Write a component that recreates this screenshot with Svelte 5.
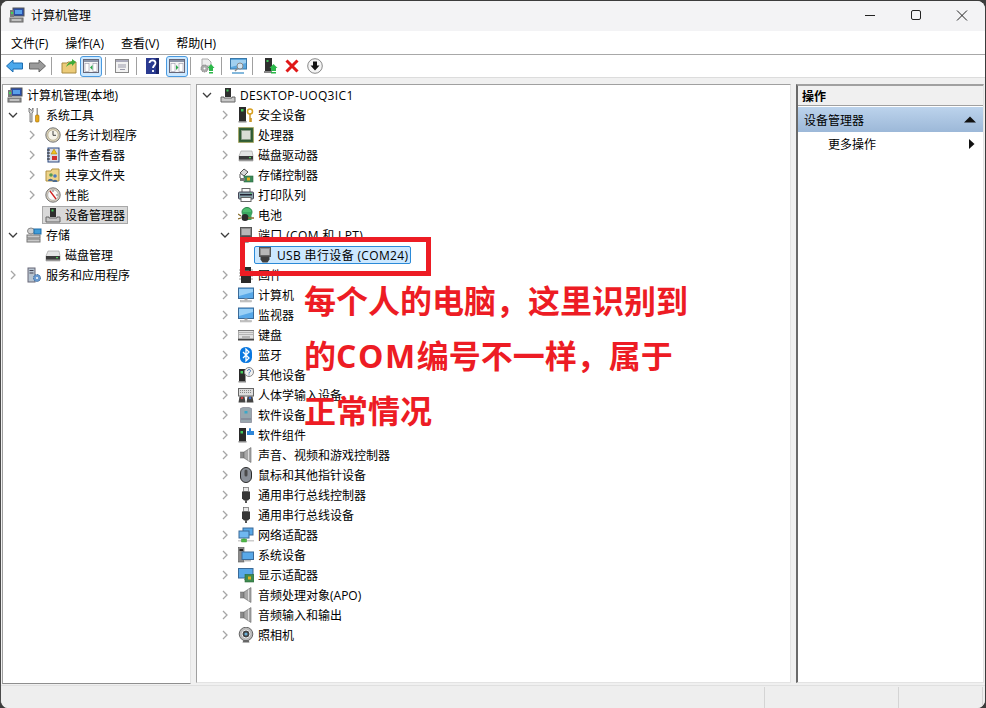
<script>
  const leftTree = [
    { label: '计算机管理(本地)', icon: 'mgmt', lv: 0 },
    { label: '系统工具', icon: 'tools', lv: 1, twist: 'open' },
    { label: '任务计划程序', icon: 'clock', lv: 2, twist: 'closed' },
    { label: '事件查看器', icon: 'log', lv: 2, twist: 'closed' },
    { label: '共享文件夹', icon: 'shared', lv: 2, twist: 'closed' },
    { label: '性能', icon: 'perf', lv: 2, twist: 'closed' },
    { label: '设备管理器', icon: 'desktop', lv: 2, twist: 'none', selected: true },
    { label: '存储', icon: 'storage', lv: 1, twist: 'open' },
    { label: '磁盘管理', icon: 'disk', lv: 2, twist: 'none' },
    { label: '服务和应用程序', icon: 'services', lv: 1, twist: 'closed' }
  ];

  const devices = [
    { label: 'DESKTOP-UOQ3IC1', icon: 'desktop', lv: 0, twist: 'open', wide: true },
    { label: '安全设备', icon: 'security', lv: 1, twist: 'closed' },
    { label: '处理器', icon: 'cpu', lv: 1, twist: 'closed' },
    { label: '磁盘驱动器', icon: 'disk', lv: 1, twist: 'closed' },
    { label: '存储控制器', icon: 'storagectl', lv: 1, twist: 'closed' },
    { label: '打印队列', icon: 'printer', lv: 1, twist: 'closed' },
    { label: '电池', icon: 'battery', lv: 1, twist: 'closed' },
    { label: '端口 (COM 和 LPT)', icon: 'port', lv: 1, twist: 'open', wide: true },
    { label: 'USB 串行设备 (COM24)', icon: 'port', lv: 2, focus: true, wide: true },
    { label: '固件', icon: 'firmware', lv: 1, twist: 'closed' },
    { label: '计算机', icon: 'monitor', lv: 1, twist: 'closed' },
    { label: '监视器', icon: 'monitor', lv: 1, twist: 'closed' },
    { label: '键盘', icon: 'keyboard', lv: 1, twist: 'closed' },
    { label: '蓝牙', icon: 'bluetooth', lv: 1, twist: 'closed' },
    { label: '其他设备', icon: 'other', lv: 1, twist: 'closed' },
    { label: '人体学输入设备', icon: 'hid', lv: 1, twist: 'closed' },
    { label: '软件设备', icon: 'softdev', lv: 1, twist: 'closed' },
    { label: '软件组件', icon: 'softcomp', lv: 1, twist: 'closed' },
    { label: '声音、视频和游戏控制器', icon: 'sound', lv: 1, twist: 'closed' },
    { label: '鼠标和其他指针设备', icon: 'mouse', lv: 1, twist: 'closed' },
    { label: '通用串行总线控制器', icon: 'usb', lv: 1, twist: 'closed' },
    { label: '通用串行总线设备', icon: 'usb', lv: 1, twist: 'closed' },
    { label: '网络适配器', icon: 'network', lv: 1, twist: 'closed' },
    { label: '系统设备', icon: 'system', lv: 1, twist: 'closed' },
    { label: '显示适配器', icon: 'display', lv: 1, twist: 'closed' },
    { label: '音频处理对象(APO)', icon: 'sound', lv: 1, twist: 'closed' },
    { label: '音频输入和输出', icon: 'sound', lv: 1, twist: 'closed' },
    { label: '照相机', icon: 'camera', lv: 1, twist: 'closed' }
  ];

  const menus = ['文件(F)', '操作(A)', '查看(V)', '帮助(H)'];
</script>

{#snippet icon(name)}
  <svg class="icon" viewBox="0 0 16 16" width="16" height="16">
    {#if name === 'mgmt'}
      <rect x="4" y="1" width="11" height="8" fill="#2a4fa8" stroke="#555" />
      <rect x="6" y="3" width="7" height="4" fill="#5aa0e8" />
      <rect x="1" y="3" width="4" height="7" fill="#7a7a7a" />
      <rect x="2" y="5" width="2" height="2" fill="#3fd05a" />
      <rect x="1" y="11" width="13" height="4" fill="#9a9a9a" stroke="#666" />
      <path d="M3 13h9" stroke="#e8e8e8" />
    {:else if name === 'tools'}
      <path d="M3 1v4l1 1v9h2V6l1-1V1L5.500 3.500z" fill="#d8d8d8" stroke="#666" stroke-width=".8" />
      <rect x="10.500" y="1" width="1.500" height="7" fill="#999" />
      <rect x="9.500" y="8" width="3.500" height="7" rx="1" fill="#e8a818" stroke="#a06c08" stroke-width=".6" />
    {:else if name === 'clock'}
      <circle cx="8" cy="8" r="7.200" fill="#d8d0b8" stroke="#777" />
      <circle cx="8" cy="8" r="5.200" fill="#f6f4ea" stroke="#a89c78" stroke-width=".6" />
      <path d="M8 4v4.300h3" fill="none" stroke="#444" />
    {:else if name === 'log'}
      <rect x="3" y="1" width="11" height="14" fill="#d8dce8" stroke="#2d4a80" />
      <path d="M2 3h3M2 6h3M2 9h3M2 12h3" stroke="#222" />
      <path d="M9 2l3 5H6z" fill="#f0c020" stroke="#a07800" stroke-width=".5" />
      <rect x="7" y="9" width="5" height="4" fill="#d03030" />
    {:else if name === 'shared'}
      <path d="M1 4h5l1-2h7v12H1z" fill="#eed48a" stroke="#b09040" />
      <circle cx="6" cy="8" r="1.800" fill="#5a9a50" />
      <circle cx="10" cy="9" r="1.800" fill="#4a7ac0" />
      <path d="M3 14c0-3 5-3 5 0zM7.500 15c0-3 5-3 5 0z" fill="#4a6a90" />
    {:else if name === 'perf'}
      <circle cx="8" cy="8" r="7.200" fill="#d8d0c0" stroke="#777" />
      <circle cx="8" cy="8" r="5.300" fill="#fafafa" stroke="#999" stroke-width=".6" />
      <path d="M5 4l6 8" stroke="#d02020" stroke-width="1.300" />
      <path d="M8 3v2M13 8h-2" stroke="#555" stroke-width=".8" />
    {:else if name === 'desktop'}
      <rect x="5" y="1" width="6" height="9" fill="#2e2e2e" />
      <rect x="6.500" y="2.500" width="2" height="2" fill="#42c85a" />
      <path d="M1 10h3v1h8v-1h3v5H1z" fill="#c8c8c8" stroke="#666" />
    {:else if name === 'storage'}
      <ellipse cx="5" cy="4" rx="3.500" ry="3" fill="#d0d0d0" stroke="#888" />
      <rect x="8" y="2" width="7" height="5" fill="#3f9cd8" stroke="#1f6ca8" />
      <rect x="1" y="8" width="13" height="3" fill="#c8c8c8" stroke="#777" />
      <rect x="1" y="12" width="13" height="3" fill="#c8c8c8" stroke="#777" />
    {:else if name === 'disk'}
      <path d="M3 4h11l1 5v5H1V9z" fill="#e4e4e4" stroke="#999" stroke-width=".6" />
      <path d="M1 9h14v5H1z" fill="#3a3a3a" />
      <rect x="1" y="12.500" width="14" height="1.500" fill="#999" />
      <rect x="11" y="10" width="2" height="1.200" fill="#52d060" />
    {:else if name === 'services'}
      <rect x="2" y="1" width="7" height="14" fill="#b8c4d0" stroke="#667" />
      <path d="M3.500 3.500h4M3.500 6h4" stroke="#445" />
      <circle cx="11" cy="11" r="3.500" fill="#6a9ad0" stroke="#3a6a9a" stroke-dasharray="1.500 .8" />
      <circle cx="11" cy="11" r="1" fill="#fff" />
    {:else if name === 'security'}
      <rect x="1" y="0" width="7" height="14" fill="#2a2a2a" />
      <rect x="3" y="2" width="2.500" height="2.500" fill="#42c85a" />
      <rect x=".5" y="14" width="8" height="1.500" fill="#888" />
      <circle cx="12" cy="4.500" r="2.500" fill="none" stroke="#d8a020" stroke-width="1.500" />
      <path d="M12 7V15M12 12h2M12 14h2" stroke="#c89018" stroke-width="1.400" />
    {:else if name === 'cpu'}
      <rect x=".5" y=".5" width="15" height="15" fill="#3e6a3c" stroke="#b0a040" stroke-dasharray="1 1" />
      <rect x="1.500" y="1.500" width="13" height="13" fill="#2f5a33" />
      <rect x="3.500" y="3.500" width="9" height="9" fill="#d8dcd4" stroke="#8a9a88" stroke-width=".6" />
    {:else if name === 'storagectl'}
      <path d="M2 6l4-4 4 3-4 4z" fill="#d8d8d8" stroke="#555" />
      <path d="M2 7v4l4 2" fill="none" stroke="#555" />
      <rect x="6" y="9" width="9" height="6" fill="#3c8a58" stroke="#2a6a40" stroke-width=".6" />
      <rect x="9" y="10.500" width="3" height="3" fill="#e0b020" />
      <rect x="2" y="11" width="5" height="3" fill="#777" />
    {:else if name === 'printer'}
      <rect x="4" y="1.500" width="8" height="4" fill="#fafafa" stroke="#666" />
      <rect x=".5" y="5" width="15" height="7" rx="1" fill="#8aa4ac" stroke="#445" />
      <rect x="2" y="7" width="12" height="1.500" fill="#223" />
      <rect x="12" y="5.800" width="1.500" height="1" fill="#42c85a" />
      <rect x="3" y="10.500" width="10" height="4" fill="#fff" stroke="#666" />
    {:else if name === 'battery'}
      <ellipse cx="9" cy="5" rx="5" ry="4.500" fill="#4ec070" stroke="#2a8048" />
      <rect x="4.500" y="5" width="9" height="8" fill="#3aa860" />
      <circle cx="7" cy="10.500" r="3.500" fill="#2a2a2a" />
      <path d="M0 7l3 2M0 12l3-1M10 11h6" stroke="#8a7030" stroke-width="1.300" />
    {:else if name === 'port'}
      <rect x="2.500" y=".5" width="11" height="9" fill="#8e8e8e" stroke="#555" />
      <path d="M5 2v6M7 2v6M9 2v6M11 2v6" stroke="#e0e0e0" />
      <rect x="2.500" y="8" width="11" height="1.500" fill="#666" />
      <path d="M3.500 9.500h9v3l-2 3h-5l-2-3z" fill="#3e3e3e" />
    {:else if name === 'firmware'}
      <rect x="3" y="0" width="10" height="16" fill="#2a2a2a" />
      <path d="M1 3h2M1 6h2M1 9h2M1 12h2M13 3h2M13 6h2M13 9h2M13 12h2" stroke="#999" />
      <rect x="5" y="3" width="6" height="4" fill="#555" />
    {:else if name === 'monitor'}
      <rect x=".5" y="1" width="15" height="10.500" fill="#58a8e8" stroke="#3a6a98" />
      <path d="M1 2h14v3L1 9z" fill="#9ad0f6" />
      <rect x="6.500" y="11.500" width="3" height="2" fill="#aaa" />
      <rect x="2.500" y="13.500" width="11" height="1.500" fill="#c8c8c8" stroke="#999" stroke-width=".4" />
    {:else if name === 'keyboard'}
      <rect x="0" y="3.500" width="16" height="8.500" fill="#e0e0e0" stroke="#777" />
      <path d="M1.500 5.500h13M1.500 7.500h13" stroke="#888" stroke-dasharray="1 1" />
      <path d="M4 10h8" stroke="#888" />
      <rect x="0" y="12" width="16" height="1.500" fill="#444" />
    {:else if name === 'bluetooth'}
      <rect x="2" y="0" width="12" height="16" rx="5.500" fill="#0a78e0" />
      <path d="M5 5l6 6-3 3V2l3 3-6 6" fill="none" stroke="#fff" stroke-width="1.300" />
    {:else if name === 'other'}
      <rect x="1" y="2" width="6.500" height="12" fill="#2a2a2a" />
      <rect x="2.500" y="4" width="2.500" height="2.500" fill="#42c85a" />
      <rect x=".5" y="14" width="7.500" height="1.500" fill="#888" />
      <circle cx="11" cy="5" r="4.500" fill="#f0f0f0" stroke="#888" />
      <path d="M9.500 4c0-2 3-2 3 0 0 1-1.500 1-1.500 2.500M11 7.500v.8" fill="none" stroke="#3a6ab0" />
    {:else if name === 'hid'}
      <rect x=".5" y="1.500" width="15" height="7.500" fill="#dcdcdc" stroke="#666" />
      <path d="M2 3.500h12M2 5.500h12" stroke="#888" stroke-dasharray="1 1" />
      <path d="M.5 15.500l1-6h5l1 6zM8.500 15.500l1-6h5l1 6z" fill="#444" />
      <circle cx="4" cy="11" r="1.200" fill="#d04040" />
      <circle cx="12" cy="11" r="1.200" fill="#4070d0" />
    {:else if name === 'softdev'}
      <path d="M2.500 1.500L5 .5h6l2.500 1v14h-11z" fill="#98a6ae" stroke="#778" stroke-width=".6" />
      <rect x="6.500" y="4" width="3" height="2.500" fill="#3aa8c8" />
      <path d="M3 12h10" stroke="#778" />
    {:else if name === 'softcomp'}
      <rect x="1" y="1" width="7" height="13" fill="#2a2a2a" />
      <rect x="2.500" y="4" width="2.500" height="2.500" fill="#42c85a" />
      <rect x=".5" y="14" width="8" height="1.500" fill="#888" />
      <path d="M9 4h2V2a1 1 0 0 1 2 0v2h3v4H9z" fill="#2f86d8" />
    {:else if name === 'sound'}
      <rect x="2.500" y="5" width="3.500" height="6" fill="#8a8a8a" stroke="#666" stroke-width=".5" />
      <path d="M6 5l7-4.500v15L6 11z" fill="#a8a8a8" stroke="#666" stroke-width=".6" />
      <path d="M10.500 2.500v11" stroke="#dcdcdc" />
    {:else if name === 'mouse'}
      <rect x="2.500" y=".5" width="11" height="15" rx="5.500" fill="#8a9098" stroke="#2a2a2a" />
      <rect x="6.500" y="2.500" width="3" height="7" rx="1.500" fill="#4a4a4a" />
    {:else if name === 'usb'}
      <rect x="5.500" y=".5" width="5" height="4" fill="#e8e8e8" stroke="#666" stroke-width=".7" />
      <path d="M4 4.500h8v7l-2 2H6l-2-2z" fill="#363636" />
      <rect x="7" y="13" width="2" height="3" fill="#555" />
    {:else if name === 'network'}
      <rect x="5" y="1" width="10" height="7" fill="#58a8e8" stroke="#3a6a98" />
      <rect x="1" y="4" width="10" height="7" fill="#70b8f0" stroke="#3a6a98" />
      <rect x="0" y="13" width="16" height="1.500" fill="#ccc" />
      <path d="M6 11v2M3.500 12h5v3h-5z" fill="#52b848" stroke="#3a9a38" stroke-width=".5" />
    {:else if name === 'system'}
      <rect x=".5" y=".5" width="5.500" height="14.500" fill="#8a8a8a" stroke="#555" stroke-width=".6" />
      <rect x="1.500" y="2" width="3.500" height="2" fill="#222" />
      <rect x="4" y="5" width="11.500" height="7.500" fill="#58a8e8" stroke="#3a6a98" />
      <rect x="7" y="13" width="6" height="1.500" fill="#bbb" />
    {:else if name === 'display'}
      <rect x=".5" y="1.500" width="14.500" height="9.500" fill="#58a8e8" stroke="#3a6a98" />
      <rect x="6" y="11" width="4" height="2" fill="#aaa" />
      <rect x="7" y="7.500" width="9" height="7.500" fill="#3e8a50" stroke="#2a6a38" stroke-width=".6" />
      <rect x="10" y="9.500" width="3" height="3" fill="#e0b020" />
    {:else if name === 'camera'}
      <circle cx="8" cy="7" r="6.800" fill="#b8b8b8" stroke="#666" />
      <circle cx="8" cy="7" r="4" fill="#444" stroke="#eee" />
      <circle cx="8" cy="7" r="1.600" fill="#6ab0d8" />
      <path d="M4.500 15.500h7l-1-2.500h-5z" fill="#666" />
    {/if}
  </svg>
{/snippet}

{#snippet chevron(kind)}
  <span class="twist">
    {#if kind === 'open'}
      <svg width="10" height="10" viewBox="0 0 10 10"><path d="M1 3l4 4 4-4" fill="none" stroke="#3c3c3c" stroke-width="1.300" /></svg>
    {:else if kind === 'closed'}
      <svg width="10" height="10" viewBox="0 0 10 10"><path d="M3 1l4 4-4 4" fill="none" stroke="#a6a6a6" stroke-width="1.300" /></svg>
    {/if}
  </span>
{/snippet}

{#snippet tree(rows)}
  {#each rows as row}
    <div class="row lv{row.lv}">
      {#if row.twist}{@render chevron(row.twist)}{/if}
      <span class="node" class:selected={row.selected} class:focus={row.focus}>
        {@render icon(row.icon)}
        <span class="label" class:wide={row.wide}>{row.label}</span>
      </span>
    </div>
  {/each}
{/snippet}

{#snippet paneBtn(play)}
  <span class="tool active">
    <svg width="16" height="16" viewBox="0 0 16 16">
      <rect x=".5" y="1.500" width="15" height="13" fill="#f4f4f4" stroke="#667" />
      <rect x="1" y="2" width="14" height="2" fill="#8a94a8" />
      <rect x="2" y="5.500" width="4" height="8" fill="#fff" stroke="#99a" stroke-width=".6" />
      <rect x="10" y="5.500" width="4" height="8" fill="#fff" stroke="#99a" stroke-width=".6" />
      <path d={play ? 'M7 7l2.500 2.500L7 12z' : 'M9.500 7L7 9.500 9.500 12z'} fill="#2aa84a" />
    </svg>
  </span>
{/snippet}

<div class="window">
  <div class="titlebar">
    <div class="app-title">
      {@render icon('mgmt')}
      <span>计算机管理</span>
    </div>
    <div class="caption">
      <svg width="46" height="30" viewBox="0 0 46 30"><path d="M18 15.500h10" stroke="#222" /></svg>
      <svg width="46" height="30" viewBox="0 0 46 30"><rect x="18.500" y="10.500" width="9" height="9" rx="1.500" fill="none" stroke="#222" /></svg>
      <svg width="46" height="30" viewBox="0 0 46 30"><path d="M18 10.500l10 10M28 10.500l-10 10" stroke="#222" /></svg>
    </div>
  </div>

  <div class="menubar">
    {#each menus as m}<span class="menu">{m}</span>{/each}
  </div>

  <div class="toolbar">
    <svg class="t-arrow" width="17" height="14" viewBox="0 0 17 14"><path d="M.5 7L7 1v3h9.500v6H7v3z" fill="#4aa8ec" stroke="#1c6cb0" /></svg>
    <svg class="t-arrow" width="17" height="14" viewBox="0 0 17 14"><path d="M16.500 7L10 1v3H.5v6H10v3z" fill="#9a9a9a" stroke="#666" /></svg>
    <i class="sep"></i>
    <svg class="t-folder" width="16" height="16" viewBox="0 0 16 16">
      <path d="M1 5h5l1-1h8v11H1z" fill="#eccb78" stroke="#a88a40" />
      <path d="M5 9c1-3 3-5 6-6V1l4 3-4 4V6c-2 0-4 1-6 3z" fill="#3faa3a" />
    </svg>
    {@render paneBtn(false)}
    <i class="sep"></i>
    <svg class="t-props" width="16" height="16" viewBox="0 0 16 16">
      <rect x="1.500" y="1.500" width="13" height="13" fill="#f2f2f2" stroke="#888" />
      <rect x="2" y="2" width="12" height="2" fill="#aab" />
      <path d="M4 7h8M4 9h8M6 11.500h5" stroke="#99a" />
    </svg>
    <i class="sep"></i>
    <svg class="t-help" width="14" height="16" viewBox="0 0 14 16">
      <rect width="13" height="16" fill="#2a3a90" />
      <rect x="10" width="3" height="16" fill="#1a2468" />
      <path d="M3.500 5c0-3.500 6-3.500 6 0 0 2.500-2.500 2.500-2.500 5M7 12v2" fill="none" stroke="#fff" stroke-width="1.800" />
    </svg>
    {@render paneBtn(true)}
    <i class="sep"></i>
    <svg class="t-export" width="16" height="16" viewBox="0 0 16 16">
      <path d="M3 1h6l3 3v4H3z" fill="#eee" stroke="#aaa" />
      <circle cx="5.500" cy="10.500" r="3.500" fill="#aaa" stroke="#888" stroke-dasharray="1.500 .8" />
      <circle cx="5.500" cy="10.500" r="1" fill="#fff" />
      <path d="M12 6l3.500 4H14v3h-4v-3H8.500z" fill="#2cb84a" />
      <rect x="10" y="14" width="4" height="1.500" fill="#2cb84a" />
    </svg>
    <i class="sep"></i>
    <svg class="t-search" width="17" height="16" viewBox="0 0 17 16">
      <rect x=".5" y=".5" width="16" height="10.500" fill="#5aa8e0" stroke="#3a78a8" />
      <path d="M1 2h15v3L1 9z" fill="#a0d0f0" />
      <circle cx="10" cy="8" r="3" fill="#cfe4f2" stroke="#888" />
      <path d="M7.500 10.500L5 13" stroke="#888" stroke-width="1.500" />
      <path d="M2 15h12" stroke="#5aa0d0" stroke-width="1.300" />
    </svg>
    <i class="sep"></i>
    <svg class="t-driver" width="14" height="16" viewBox="0 0 14 16">
      <rect x="1" width="7" height="13" fill="#2e2e2e" />
      <rect x="2.500" y="2" width="2" height="2" fill="#42c85a" />
      <rect y="13" width="8" height="2" fill="#888" />
      <path d="M9.500 6l4 4H12v3H7v-3H5.500z" fill="#2cb84a" />
      <rect x="7" y="14" width="5" height="1.500" fill="#2cb84a" />
    </svg>
    <svg class="t-x" width="14" height="14" viewBox="0 0 14 14"><path d="M1.500 1.500l11 11M12.500 1.500l-11 11" stroke="#e01818" stroke-width="3" /></svg>
    <svg class="t-down" width="16" height="16" viewBox="0 0 16 16">
      <circle cx="8" cy="8" r="7.300" fill="#f4f4f4" stroke="#888" />
      <path d="M6 3.500h4v4h2.500L8 12.500 3.500 7.500H6z" fill="#111" />
    </svg>
  </div>

  <div class="panes">
    <div class="pane left">{@render tree(leftTree)}</div>
    <div class="pane middle">{@render tree(devices)}</div>
    <div class="pane actions">
      <div class="act-head">操作</div>
      <div class="act-section">
        <span>设备管理器</span>
        <svg width="12" height="7" viewBox="0 0 12 7"><path d="M0 6.500L6 .5l6 6z" fill="#111" /></svg>
      </div>
      <div class="act-item">
        <span>更多操作</span>
        <svg width="6" height="10" viewBox="0 0 6 10"><path d="M0 0l5.500 5L0 10z" fill="#111" /></svg>
      </div>
    </div>
  </div>

  <div class="statusbar">
    <span class="cell first"></span>
    <span class="cell second"></span>
    <span class="cell"></span>
  </div>

  <div class="callout-box"></div>
  <div class="callout-text">
    <div>每个人的电脑，这里识别到</div>
    <div>的<span class="com">COM</span>编号不一样，属于</div>
    <div>正常情况</div>
  </div>
</div>

<style>
  :global(body) {
    background: #3c3c3c;
    overflow: hidden;
  }

  .window {
    position: relative;
    box-sizing: border-box;
    width: 985px;
    height: 707px;
    margin-top: 1px;
    border-left: 1px solid #4a4a4a;
    background: #fff;
    border-radius: 8px;
    overflow: hidden;
    display: flex;
    flex-direction: column;
    font-family: "Open Sans", "Noto Sans CJK SC", "Liberation Sans", sans-serif;
    font-size: 12px;
    color: #000;
  }

  .icon {
    flex: none;
    display: block;
  }

  .titlebar {
    height: 28px;
    padding-bottom: 2px;
    flex: none;
    display: flex;
    justify-content: space-between;
    align-items: center;
    background: #f3f3f5;
  }

  .app-title {
    display: flex;
    align-items: center;
    gap: 6px;
    padding-left: 8px;
  }

  .caption {
    display: flex;
  }

  .menubar {
    height: 23px;
    flex: none;
    display: flex;
    align-items: center;
    gap: 17px;
    padding-left: 10px;
    border-bottom: 1px solid #a8a8a8;
  }

  .toolbar {
    height: 22px;
    flex: none;
    display: flex;
    align-items: center;
    padding-left: 5px;
    border-bottom: 1px solid #dcdcdc;
  }

  .sep {
    width: 1px;
    height: 18px;
    background: #a0a0a0;
  }

  .tool {
    display: flex;
    align-items: center;
    justify-content: center;
    box-sizing: border-box;
    width: 22px;
    height: 21px;
  }

  .tool.active {
    background: #cce8ff;
    border: 1px solid #4a9ae0;
    border-radius: 3px;
  }

  .t-arrow + .t-arrow { margin-left: 6px; }
  .t-arrow + .t-arrow + .sep { margin-left: 5px; }
  .t-folder { margin-left: 9px; }
  .t-folder + .tool.active { margin-left: 3px; }
  .tool.active + .sep { margin-left: 3px; }
  .t-props { margin-left: 8px; }
  .t-props + .sep { margin-left: 6px; }
  .t-help { margin-left: 9px; }
  .t-help + .tool.active { margin-left: 6px; }
  .t-help + .tool.active + .sep { margin-left: 2px; }
  .t-export { margin-left: 8px; }
  .t-export + .sep { margin-left: 6px; }
  .t-search { margin-left: 8px; }
  .t-search + .sep { margin-left: 5px; }
  .t-driver { margin-left: 11px; }
  .t-x { margin-left: 7px; }
  .t-down { margin-left: 8px; }

  .panes {
    flex: 1;
    min-height: 0;
    display: flex;
    gap: 5px;
    padding: 6px 1px 2px 1px;
    background: #f0f0f0;
  }

  .pane {
    box-sizing: border-box;
    background: #fff;
    border: 1px solid #e3e3e3;
    border-top-color: #a0a0a0;
    border-left-color: #a0a0a0;
    overflow: hidden;
  }

  .left {
    width: 189px;
    margin-bottom: -1px;
    border-bottom-color: #8e8e8e;
  }
  .middle { width: 595px; }
  .actions { flex: 1; border-left: 2px solid #6a6a6a; border-top: 2px solid #a0a0a0; }

  .row {
    height: 20px;
    display: flex;
    align-items: center;
    white-space: nowrap;
  }

  .twist {
    width: 20px;
    flex: none;
    display: flex;
    justify-content: center;
  }

  .node {
    display: flex;
    align-items: center;
    gap: 4px;
    box-sizing: border-box;
    height: 18px;
    padding: 0 2px;
    border: 1px solid transparent;
  }

  .label.wide {
    letter-spacing: .35px;
  }

  .node.selected {
    background: #d9d9d9;
    border-color: #a8a8a8;
  }

  .node.focus {
    background: #cce8ff;
    border-color: #2b8ad8;
    border-radius: 2px;
  }

  .left .lv0 { padding-left: 1px; }
  .left .lv1 { padding-left: 0; }
  .left .lv2 { padding-left: 19px; }

  .middle .lv0 { padding-left: 0; }
  .middle .lv1 { padding-left: 18px; }
  .middle .lv2 { padding-left: 57px; }

  .act-head {
    height: 19px;
    line-height: 21px;
    padding-left: 4px;
    background: #f0f0f0;
    border-bottom: 1px solid #a0a0a0;
    font-weight: 700;
    overflow: hidden;
  }

  .act-section {
    margin-top: 1px;
    height: 25px;
    display: flex;
    align-items: center;
    justify-content: space-between;
    padding: 0 7px 0 6px;
    background: linear-gradient(#bcd3ec, #9cb8d8);
  }

  .act-item {
    height: 22px;
    padding-top: 1px;
    display: flex;
    align-items: center;
    justify-content: space-between;
    padding-left: 30px;
    padding-right: 8px;
  }

  .statusbar {
    height: 21px;
    flex: none;
    display: flex;
    padding: 1px 2px 0 0;
    background: #eeeeee;
    border-top: 1px solid #e0e0e0;
  }

  .cell {
    flex: 1;
    border-right: 1px solid #d4d4d4;
  }

  .cell.first { flex: none; width: 763px; }
  .cell.second { flex: none; width: 133px; }

  .callout-box {
    position: absolute;
    left: 239px;
    top: 236px;
    width: 181px;
    height: 29px;
    border: 5px solid #ed1c24;
  }

  .callout-text {
    position: absolute;
    left: 303px;
    top: 272px;
    font-size: 32px;
    line-height: 55px;
    font-weight: 700;
    color: #ed1c24;
    white-space: nowrap;
  }

  .com {
    letter-spacing: 1.6px;
  }
</style>
